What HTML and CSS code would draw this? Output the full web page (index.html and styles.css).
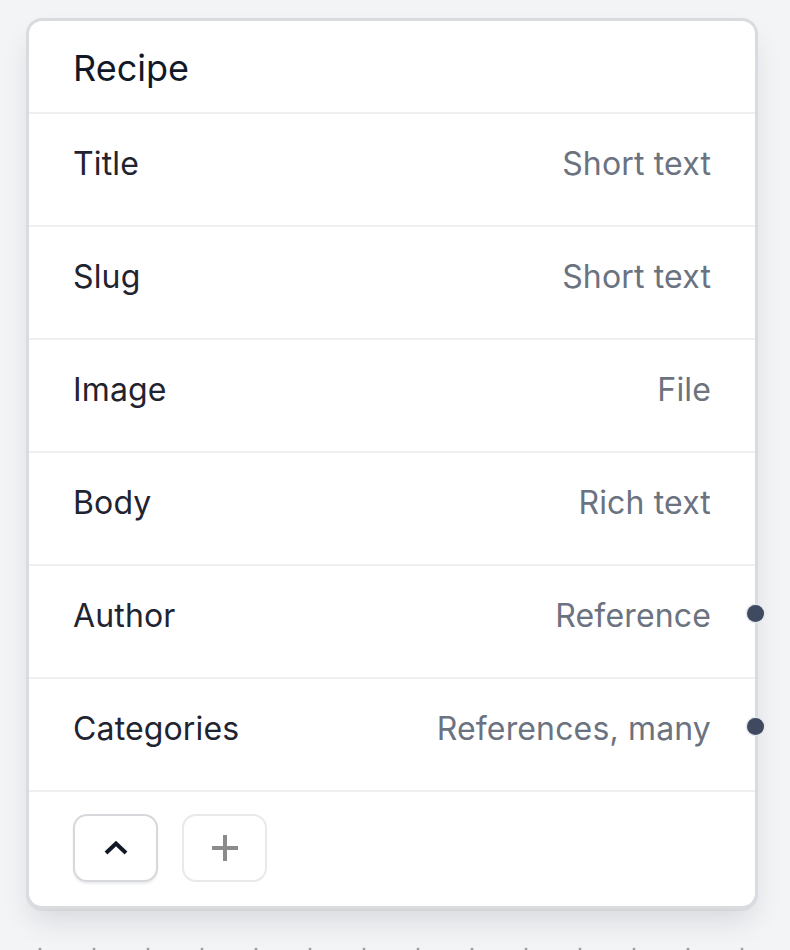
FILE: index.html
```html
<!DOCTYPE html>
<html lang="en">
<head>
<meta charset="utf-8">
<title>Recipe</title>
<link rel="stylesheet" href="styles.css">
</head>
<body>
<div class="canvas">
  <div class="card">
    <div class="card-header">Recipe</div>
    <div class="field"><span class="field-name">Title</span><span class="field-type">Short text</span></div>
    <div class="field"><span class="field-name">Slug</span><span class="field-type">Short text</span></div>
    <div class="field"><span class="field-name">Image</span><span class="field-type">File</span></div>
    <div class="field"><span class="field-name">Body</span><span class="field-type">Rich text</span></div>
    <div class="field"><span class="field-name">Author</span><span class="field-type">Reference</span><span class="handle"></span></div>
    <div class="field"><span class="field-name">Categories</span><span class="field-type">References, many</span><span class="handle"></span></div>
    <div class="card-footer">
      <button class="btn btn-collapse" type="button" aria-label="Collapse">
        <svg width="24" height="14" viewBox="0 0 24 14"><polyline points="2,12 12,2.5 22,12" fill="none" stroke="#111827" stroke-width="4"/></svg>
      </button>
      <button class="btn btn-add" type="button" aria-label="Add field">
        <svg width="26" height="26" viewBox="0 0 26 26"><path d="M13 0V26M0 13H26" fill="none" stroke="#8a8b8d" stroke-width="4"/></svg>
      </button>
    </div>
  </div>
</div>
</body>
</html>
```
FILE: styles.css
```css
html, body {
  margin: 0;
  padding: 0;
}
body {
  width: 790px;
  height: 950px;
  overflow: hidden;
  background-color: #f3f4f6;
  background-image: radial-gradient(circle, #9a9ea6 1.2px, transparent 1.7px);
  background-size: 54px 54px;
  background-position: 13px 4px;
  font-family: Inter, "Noto Sans", sans-serif;
}
.canvas {
  padding: 18px 0 0 26px;
}
.card {
  box-sizing: border-box;
  width: 732px;
  background: #ffffff;
  border: 3px solid #d9dbde;
  border-radius: 16px;
  box-shadow: 0 16px 30px -6px rgba(17, 24, 39, 0.13), 0 2px 0 rgba(17, 24, 39, 0.05);
  display: flex;
  flex-direction: column;
}
.card-header {
  padding: 25px 44px 22px;
  font-size: 36px;
  line-height: 44px;
  color: #111827;
  border-bottom: 2px solid #eeeff1;
}
.field {
  position: relative;
  display: flex;
  justify-content: space-between;
  align-items: center;
  padding: 26px 44px 37px;
  font-size: 32px;
  line-height: 48px;
  letter-spacing: 0.15px;
  border-bottom: 2px solid #eeeff1;
}
.field-name {
  color: #1f2430;
}
.field-type {
  color: #6b7280;
}
.handle {
  position: absolute;
  right: -9px;
  top: 39px;
  width: 17px;
  height: 17px;
  border-radius: 50%;
  background: #3f4a60;
  box-shadow: 0 0 0 1.5px #e4e7ec;
}
.card-footer {
  display: flex;
  gap: 24px;
  padding: 22px 44px 24px;
}
.btn {
  box-sizing: border-box;
  width: 85px;
  height: 68px;
  border-radius: 14px;
  background: #ffffff;
  display: flex;
  align-items: center;
  justify-content: center;
  padding: 0;
  margin: 0;
}
.btn-collapse {
  border: 2px solid #d6d8dc;
  box-shadow: 0 2px 2px rgba(17, 24, 39, 0.08);
}
.btn-add {
  border: 2px solid #e8e9eb;
}
.btn svg {
  display: block;
}
```
